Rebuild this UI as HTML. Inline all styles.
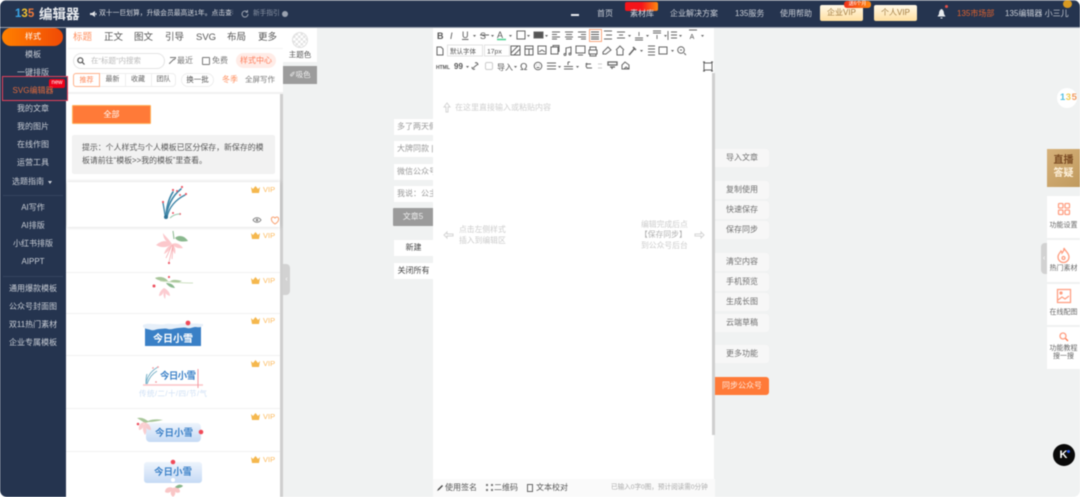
<!DOCTYPE html>
<html lang="zh"><head><meta charset="utf-8"><title>135编辑器</title>
<style>
*{box-sizing:border-box}
html,body{margin:0;padding:0;width:1080px;height:497px;overflow:hidden;background:#fff}
#r{position:relative;width:1080px;height:497px;overflow:hidden;background:#f0f2f2;border-radius:7px;font-family:"Liberation Sans","Noto Sans CJK SC",sans-serif;filter:blur(.5px)}
.a,.t,.c{position:absolute}
.t,.c{white-space:nowrap;line-height:12px;height:12px;font-size:8px}
.c{text-align:center}
.s{color:#c9ced6;left:0;width:66px}
.n{color:#c9ced6;top:8px}
.b{position:absolute;left:394px;width:39px;height:16px;background:#fff;overflow:hidden;font-size:8px;line-height:16px;color:#999;padding-left:3px;white-space:nowrap}
.r{position:absolute;left:715px;width:54px;height:18px;background:#f7f7f7;border-radius:0 3px 3px 0;font-size:8px;line-height:18px;text-align:center;color:#707070}
.v{position:absolute;left:251px;font-size:7.5px;line-height:10px;color:#fdbb5e;white-space:nowrap}
.v svg{vertical-align:-1px;margin-right:3px}
.l{position:absolute;left:66px;width:214px;height:1px;background:#f2f2f2}
.p{position:absolute;left:1047px;width:33px;background:#fff}
</style></head><body><div id="r">

<!-- header -->
<div class="a" style="left:0;top:0;width:1080px;height:28px;background:#25344f;border-top:1px solid #6f7889;border-bottom:1px solid #9aa2b0"></div>
<div class="t" style="left:15px;top:7px;font-size:11.500px;height:14px;line-height:14px;font-weight:bold"><span style="color:#3aa6e8">1</span><span style="color:#f2c230">3</span><span style="color:#ef7a3a">5</span></div>
<div class="t" style="left:39px;top:7px;font-size:13.500px;height:15px;line-height:15px;font-weight:bold;color:#e8ebef">编辑器</div>
<svg class="a" style="left:90px;top:10px" width="8" height="8" viewBox="0 0 8 8"><path d="M0 3h2l3-2v6L2 5H0z" fill="#dfe2e6"/><path d="M6 3v2" stroke="#dfe2e6"/></svg>
<div class="t" style="left:99px;top:8px;width:134px;overflow:hidden;color:#d8dbe0;font-size:6.800px">双十一巨划算，升级会员最高送1年。点击查看</div>
<svg class="a" style="left:241px;top:10px" width="8" height="8" viewBox="0 0 8 8"><path d="M7 4a3 3 0 1 1-1-2.200M6.500 0v2.200H4.500" fill="none" stroke="#9aa2b0"/></svg>
<div class="t n" style="left:253px;color:#8b95a6;font-size:6.700px">新手指引</div>
<div class="a" style="left:282px;top:11px;width:6px;height:6px;border-radius:50%;background:#9aa2b0"></div>
<div class="a" style="left:571px;top:14px;width:8px;height:2px;background:#e8ebef"></div>
<div class="t n" style="left:597px">首页</div>
<div class="a" style="left:625px;top:2px;width:33px;height:9px;background:linear-gradient(90deg,#f5141a,#f5141a 50%,#ff8a10);border-radius:2px"></div>
<div class="t n" style="left:630px;color:#d5d8de">素材库</div>
<div class="t n" style="left:670px">企业解决方案</div>
<div class="t n" style="left:735px">135服务</div>
<div class="t n" style="left:780px">使用帮助</div>
<div class="c" style="left:820px;top:5px;width:43px;height:16px;line-height:16px;border-radius:2px;background:linear-gradient(#fff8e8,#ffdf9f);color:#a27c42">企业VIP</div>
<div class="c" style="left:844px;top:1px;width:27px;height:7px;line-height:7px;font-size:5px;border-radius:3px;background:linear-gradient(90deg,#f0301a,#ff8a10);color:#fff">送6个月</div>
<div class="c" style="left:874px;top:5px;width:43px;height:16px;line-height:16px;border-radius:2px;background:linear-gradient(#fff8e8,#ffdf9f);color:#a27c42">个人VIP</div>
<svg class="a" style="left:937px;top:9px" width="9" height="10" viewBox="0 0 9 10"><path d="M4.500 0C2.500 1 2 3 2 5L.5 7.500h8L7 5c0-2-.5-4-2.500-5zM3.500 8.500h2v1h-2z" fill="#e8ebef"/></svg>
<div class="a" style="left:945px;top:5px;width:3px;height:3px;border-radius:50%;background:#e2504a"></div>
<div class="t n" style="left:957px;color:#e0622e">135市场部</div>
<div class="t n" style="left:1005px">135编辑器 小三儿</div>
<div class="a" style="left:1063px;top:0;width:9px;height:8px;border-radius:50%;background:#d89a22"></div>

<!-- sidebar -->
<div class="a" style="left:0;top:28px;width:66px;height:469px;background:#25344f"></div>
<div class="a" style="left:2px;top:28px;width:61px;height:18px;border-radius:9px;background:linear-gradient(90deg,#ff8000,#f04a06)"></div>
<div class="c s" style="top:31px;color:#fff">样式</div>
<div class="c s" style="top:49px">模板</div>
<div class="c s" style="top:67px">一键排版</div>
<div class="c s" style="top:103px">我的文章</div>
<div class="c s" style="top:121px">我的图片</div>
<div class="c s" style="top:139px">在线作图</div>
<div class="c s" style="top:157px">运营工具</div>
<div class="t" style="left:12px;top:176px;color:#c9ced6">选题指南</div>
<div class="a" style="left:48px;top:181px;border:2.500px solid transparent;border-top:3px solid #c9ced6"></div>
<div class="a" style="left:3px;top:195px;width:60px;height:1px;background:#35445f"></div>
<div class="c s" style="top:202px">AI写作</div>
<div class="c s" style="top:220px">AI排版</div>
<div class="c s" style="top:238px">小红书排版</div>
<div class="c s" style="top:256px">AIPPT</div>
<div class="a" style="left:3px;top:276px;width:60px;height:1px;background:#35445f"></div>
<div class="c s" style="top:283px">通用爆款模板</div>
<div class="c s" style="top:301px">公众号封面图</div>
<div class="c s" style="top:319px">双11热门素材</div>
<div class="c s" style="top:337px">企业专属模板</div>

<!-- panel -->
<div class="a" style="left:66px;top:28px;width:217px;height:469px;background:#fff"></div>

<!-- highlighted SVG menu item (sits over the panel edge) -->
<div class="a" style="left:2px;top:76px;width:66px;height:25px;background:#25344f;border:1.500px solid #e4405a"></div>
<div class="c" style="left:49px;top:79px;width:16px;height:9px;line-height:8px;font-size:6px;border-radius:2px;background:#f0021a;color:#fff">new</div>
<div class="c s" style="top:85px;color:#df6a3c">SVG编辑器</div>

<div class="t" style="left:73px;top:32px;font-size:9.500px;color:#ff9060">标题</div>
<div class="t" style="left:104px;top:32px;font-size:9.500px;color:#555">正文</div>
<div class="t" style="left:134px;top:32px;font-size:9.500px;color:#555">图文</div>
<div class="t" style="left:165px;top:32px;font-size:9.500px;color:#555">引导</div>
<div class="t" style="left:196px;top:32px;font-size:9.500px;color:#555">SVG</div>
<div class="t" style="left:227px;top:32px;font-size:9.500px;color:#555">布局</div>
<div class="t" style="left:258px;top:32px;font-size:9.500px;color:#555">更多</div>
<div class="a" style="left:68px;top:48px;width:215px;height:1px;background:#f3f3f3"></div>
<div class="a" style="left:73px;top:53px;width:92px;height:16px;border:1px solid #e4e4e4;border-radius:8px"></div>
<svg class="a" style="left:77px;top:57px" width="8" height="8" viewBox="0 0 8 8"><circle cx="3.300" cy="3.300" r="2.500" fill="none" stroke="#555" stroke-width="1.200"/><path d="M5 5l2.500 2.500" stroke="#555" stroke-width="1.200"/></svg>
<div class="t" style="left:91px;top:55px;color:#bbb;font-size:7.500px">在“标题”内搜索</div>
<svg class="a" style="left:169px;top:57px" width="7" height="7" viewBox="0 0 7 7"><path d="M0 7L5 2M1 .5h6L5 3" stroke="#777" fill="none"/></svg>
<div class="t" style="left:177px;top:55px;color:#777">最近</div>
<div class="a" style="left:202px;top:57px;width:8px;height:8px;border:1px solid #777;border-radius:1px"></div>
<div class="t" style="left:212px;top:55px;color:#777">免费</div>
<div class="c" style="left:236px;top:53px;width:40px;height:15px;line-height:15px;border-radius:8px;background:#ffece7;color:#ff7d5a">样式中心</div>
<div class="c" style="left:73px;top:73px;width:27px;height:14px;line-height:13px;font-size:7px;border:1px solid #ffb28c;border-radius:3px 0 0 3px;color:#ff8a5c">推荐</div>
<div class="c" style="left:100px;top:73px;width:76px;height:14px;border:1px solid #eee;border-left:0;border-radius:0 4px 4px 0"></div>
<div class="c" style="left:100px;top:74px;width:25px;font-size:7px;color:#666">最新</div>
<div class="a" style="left:125px;top:73px;width:1px;height:14px;background:#eee"></div>
<div class="c" style="left:125px;top:74px;width:26px;font-size:7px;color:#666">收藏</div>
<div class="a" style="left:151px;top:73px;width:1px;height:14px;background:#eee"></div>
<div class="c" style="left:151px;top:74px;width:25px;font-size:7px;color:#666">团队</div>
<div class="c" style="left:181px;top:73px;width:33px;height:14px;line-height:12px;font-size:7.500px;border:1px solid #eee;border-radius:7px;color:#555">换一批</div>
<div class="t" style="left:222px;top:74px;color:#ff9060">冬季</div>
<div class="t" style="left:245px;top:74px;color:#777;font-size:7.500px">全屏写作</div>
<div class="a" style="left:68px;top:92px;width:215px;height:2px;background:#f1f1f1"></div>
<div class="a" style="left:280px;top:94px;width:3px;height:403px;background:#cfcfcf"></div>
<div class="c" style="left:72px;top:105px;width:79px;height:19px;line-height:18px;background:#ff7a38;border:1px solid #ffb05a;border-radius:1px;color:#fff">全部</div>
<div class="a" style="left:72px;top:135px;width:203px;height:39px;background:#f2f2f2;border-radius:2px"></div>
<div class="t" style="left:82px;top:142px;color:#555;font-size:7.900px">提示：个人样式与个人模板已区分保存，新保存的模</div>
<div class="t" style="left:82px;top:155px;color:#555;font-size:7.900px">板请前往“模板&gt;&gt;我的模板”里查看。</div>

<div class="a" style="left:67px;top:182px;width:213px;height:45px;background:#fff;box-shadow:0 0 4px rgba(0,0,0,.18)"></div>
<div class="l" style="top:272px"></div><div class="l" style="top:313px"></div><div class="l" style="top:355px"></div><div class="l" style="top:408px"></div><div class="l" style="top:451px"></div>

<!-- VIP marks -->
<div class="v" style="top:185px"><svg width="9" height="7" viewBox="0 0 9 7"><path d="M0 1l2 2 2.500-3L7 3l2-2-1 6H1z" fill="#f5b84e"/></svg>VIP</div>
<div class="v" style="top:231px"><svg width="9" height="7" viewBox="0 0 9 7"><path d="M0 1l2 2 2.500-3L7 3l2-2-1 6H1z" fill="#f5b84e"/></svg>VIP</div>
<div class="v" style="top:276px"><svg width="9" height="7" viewBox="0 0 9 7"><path d="M0 1l2 2 2.500-3L7 3l2-2-1 6H1z" fill="#f5b84e"/></svg>VIP</div>
<div class="v" style="top:316px"><svg width="9" height="7" viewBox="0 0 9 7"><path d="M0 1l2 2 2.500-3L7 3l2-2-1 6H1z" fill="#f5b84e"/></svg>VIP</div>
<div class="v" style="top:359px"><svg width="9" height="7" viewBox="0 0 9 7"><path d="M0 1l2 2 2.500-3L7 3l2-2-1 6H1z" fill="#f5b84e"/></svg>VIP</div>
<div class="v" style="top:412px"><svg width="9" height="7" viewBox="0 0 9 7"><path d="M0 1l2 2 2.500-3L7 3l2-2-1 6H1z" fill="#f5b84e"/></svg>VIP</div>
<div class="v" style="top:455px"><svg width="9" height="7" viewBox="0 0 9 7"><path d="M0 1l2 2 2.500-3L7 3l2-2-1 6H1z" fill="#f5b84e"/></svg>VIP</div>

<!-- illustrations -->
<svg class="a" style="left:66px;top:180px" width="214" height="317" viewBox="66 180 214 317">
 <defs><linearGradient id="g" x1="0" y1="0" x2="0" y2="1"><stop offset="0" stop-color="#eef4fc"/><stop offset="1" stop-color="#c5daf5"/></linearGradient></defs>
 <!-- branch -->
 <g fill="none" stroke="#3f86a8" stroke-linecap="round">
  <path d="M166 218c0-10 3-20 7-26" stroke-width="1.600"/><path d="M166 218c1-11 6-22 15-29" stroke-width="1.600"/><path d="M167 217c2-9 8-17 18-22" stroke-width="1.300"/><path d="M165.500 218c-1-6-1.500-10-2.500-15" stroke-width="1.300"/>
 </g>
 <circle cx="166" cy="217" r="2" fill="#2f7295"/>
 <g fill="#ee5a68"><circle cx="173" cy="190" r="1.100"/><circle cx="177" cy="191" r="1"/><circle cx="182" cy="187" r="1.100"/><circle cx="186" cy="194" r="1.100"/><circle cx="180" cy="195" r="1"/><circle cx="163" cy="202" r="1.100"/><circle cx="173" cy="213" r="1"/><circle cx="180" cy="214" r="1"/></g>
 <path d="M170 218c3-3 6-4 10-4" stroke="#9ccab0" fill="none"/>
 <!-- flower 1 -->
 <g fill="#fbb6bc" opacity=".75"><path d="M172 244c-5-4-10-4-16 1 5 3 11 3 16-1z"/><path d="M172 244c-4-6-8-9-9-11 0 5 3 10 9 11z"/><path d="M172 244c4-2 8 0 11 4-5 1-9-1-11-4z"/><path d="M172 244c-4 2-7 6-8 10 4-2 7-5 8-10z"/><path d="M172 244c0 4 1 8 3 10 1-4 0-8-3-10z"/></g>
 <path d="M173 245l-4 17M173 245l-1 14M172 245l-6 13" stroke="#f6a5aa" stroke-width=".7" fill="none"/>
 <path d="M175 238c3-3 9-3 13 3-5 1-10 1-13-3z" fill="#8ab88e"/><path d="M173 231l1 8" stroke="#8ab88e"/>
 <circle cx="169" cy="263" r="1.100" fill="#ee5a68"/>
 <!-- flower 2 -->
 <path d="M155 278c5-2 10-1 13 3-5 0-10 0-13-3z" fill="#a8c69a"/><path d="M166 283c4 0 7 1 9 5-4 0-7-2-9-5z" fill="#8ab88e"/><path d="M170 281c4-2 8-1 12 0-4 2-8 2-12 0z" fill="#a8c69a"/><path d="M160 281c10 1 22 2 33 2" stroke="#c0d8b0" fill="none" stroke-width=".8"/>
 <g fill="#fbbcc2" opacity=".75"><path d="M164 288c-3 2-5 5-5 8 3 0 5-3 5-8z"/><path d="M164 288c4 2 6 5 6 8-4-1-6-4-6-8z"/><path d="M164 288c-1 4-1 8 1 11 1-4 1-8-1-11z"/></g>
 <circle cx="154" cy="286" r="1.500" fill="#ee5060"/><circle cx="169" cy="277" r="1.100" fill="#ee5a68"/>
 <!-- snow 1 -->
 <rect x="145" y="327" width="56" height="19" fill="#3a80c6"/>
 <path d="M143 325c4-2 8-1 11-1s8 1 12 0 9 1 13 0 9-1 24 0v2c-3 2-6 1-8 1s-5 2-8 1-6 0-9 0-7 2-10 1-6 0-9 0-5 2-8 1-6-1-8-3z" fill="#e6eff9"/>
 <circle cx="188" cy="323" r="2.400" fill="#f04a58"/>
 <text x="173" y="342" text-anchor="middle" font-size="10" font-weight="bold" fill="#fff" font-family="Liberation Sans,Noto Sans CJK SC,sans-serif">今日小雪</text>
 <!-- snow 2 -->
 <g fill="none" stroke="#76b0c8"><path d="M146 384c1-7 5-13 12-17M147 384c2-6 5-10 10-13M146 384c0-4 0-7 1-10"/></g>
 <g fill="#f39aa0"><circle cx="158" cy="367" r=".9"/><circle cx="153" cy="368" r=".9"/><circle cx="156" cy="382" r=".9"/></g>
 <path d="M143 385h60" stroke="#fcc5c8" stroke-width="1.500"/><path d="M198 369v19" stroke="#f49aa0"/>
 <text x="160" y="379" font-size="9.500" font-weight="bold" fill="#3d82c8" font-family="Liberation Sans,Noto Sans CJK SC,sans-serif" textLength="36">今日小雪</text>
 <text x="139" y="396" font-size="7.500" fill="#cfe0f5" font-family="Liberation Sans,Noto Sans CJK SC,sans-serif" textLength="68">传统/二/十/四/节/气</text>
 <!-- snow 3 -->
 <rect x="146" y="423" width="55" height="19" rx="4" fill="url(#g)"/>
 <path d="M137 418c5-1 8 1 11 3 4-2 9-2 15-1-5 1-10 2-14 2l-4 1z" fill="#a8c69a"/>
 <g fill="#fac6c8" opacity=".85"><path d="M144 422c-4 1-6 4-5 8 3 0 5-3 5-8z"/><path d="M144 422c4 1 7 4 7 8-4 0-7-3-7-8z"/><path d="M144 424c-2 4-1 8 1 11 2-3 2-8-1-11z"/></g>
 <circle cx="138" cy="424" r="1.300" fill="#ee5060"/><circle cx="201" cy="432" r="2.300" fill="#f04a58"/>
 <text x="174" y="436" text-anchor="middle" font-size="9.500" font-weight="bold" fill="#3d82c8" font-family="Liberation Sans,Noto Sans CJK SC,sans-serif">今日小雪</text>
 <!-- snow 4 -->
 <rect x="144" y="462" width="58" height="21" rx="3" fill="url(#g)"/>
 <circle cx="173" cy="462" r="2.300" fill="#f04a58"/><circle cx="173" cy="480" r="2" fill="#fff"/>
 <text x="173" y="475" text-anchor="middle" font-size="9.500" font-weight="bold" fill="#3d82c8" font-family="Liberation Sans,Noto Sans CJK SC,sans-serif">今日小雪</text>
 <g fill="#f9c0c0" opacity=".9"><path d="M173 488c-4-2-8 0-8 4 3 2 7 0 8-4z"/><path d="M173 488c4-2 7 0 7 4-3 2-6 0-7-4z"/><path d="M173 488c-3 3-3 7 0 9 3-2 3-6 0-9z"/></g>
 <path d="M175 487c3-3 6-3 8-1-2 2-5 3-8 1z" fill="#86b48a"/>
 <!-- eye & heart -->
 <path d="M253 220c2-3 6-3 8 0-2 3-6 3-8 0z" fill="none" stroke="#888"/><circle cx="257" cy="220" r="1.300" fill="#888"/>
 <path d="M275 224c-5-3-4-7-2-7 1 0 2 1 2 1s1-1 2-1c2 0 3 4-2 7z" fill="none" stroke="#f8a070"/>
</svg>
<div class="a" style="left:283px;top:264px;width:7px;height:31px;background:#d2d2d2;border-radius:0 4px 4px 0;color:#fff;font-size:7px;line-height:31px;text-align:center">‹</div>

<!-- theme column -->
<div class="a" style="left:283px;top:28px;width:34px;height:34px;background:#fff"></div>
<div class="a" style="left:292px;top:32px;width:16px;height:16px;border-radius:50%;border:1px solid #e0e0e0;background:repeating-conic-gradient(#e4e4e4 0 25%,#fff 0 50%) 0 0/5px 5px"></div>
<div class="c" style="left:283px;top:49px;width:34px;color:#555;font-size:7.500px">主题色</div>
<div class="c" style="left:283px;top:66px;width:34px;height:18px;line-height:18px;background:#9c9c9c;color:#eee;font-size:7.500px">✐吸色</div>

<!-- left article tabs -->
<div class="b" style="top:119px">多了两天假期</div>
<div class="b" style="top:141px">大牌同款 | 好</div>
<div class="b" style="top:164px">微信公众号平台</div>
<div class="b" style="top:186px">我说：公主请</div>
<div class="c" style="left:393px;top:208px;width:40px;height:18px;line-height:18px;background:#9b9b9b;color:#eee;border-radius:1px 0 0 1px">文章5</div>
<div class="c" style="left:394px;top:240px;width:39px;height:16px;line-height:16px;background:#fff;color:#444">新建</div>
<div class="c" style="left:394px;top:263px;width:39px;height:16px;line-height:16px;background:#fff;color:#444">关闭所有</div>

<!-- editor -->
<div class="a" style="left:433px;top:28px;width:281px;height:451px;background:#fff"></div>
<div class="a" style="left:433px;top:479px;width:282px;height:18px;background:#fafafa"></div>
<div class="a" style="left:712px;top:73px;width:3px;height:362px;background:#cfcfcf"></div>

<svg class="a" style="left:433px;top:28px" width="282" height="50" viewBox="433 28 282 50" fill="none" stroke="#666" stroke-width="1">
 <g font-family="Liberation Sans,Noto Sans CJK SC,sans-serif" fill="#555" stroke="none">
  <text x="437" y="39" font-size="9" font-weight="bold">B</text>
  <text x="450" y="39" font-size="9" font-style="italic">I</text>
  <text x="462" y="38" font-size="9" text-decoration="underline">U</text>
  <text x="480" y="39" font-size="9">S</text>
  <text x="497" y="38" font-size="9">A</text>
  <text x="692" y="39" font-size="7" text-anchor="middle">A</text>
  <text x="436" y="69" font-size="5" font-weight="bold">HTML</text>
  <text x="454" y="69" font-size="8" font-weight="bold">99</text>
  <text x="497" y="70" font-size="8">导入</text>
  <text x="520" y="70" font-size="10">Ω</text>
 </g>
 <path d="M480 35h9" stroke="#666"/>
 <path d="M497 39.500h9" stroke="#4dd090" stroke-width="1.500"/>
 <rect x="517" y="31" width="8" height="8"/><rect x="534" y="32" width="9" height="6" fill="#555"/>
 <g stroke-width=".9">
 <path d="M552 32h8M552 34.500h5M552 37h8M552 39h5M565 32h8M566 34.500h6M565 37h8M566 39h6M578 32h8M581 34.500h5M578 37h8M581 39h5"/>
 <path d="M591 32h8M591 34.500h8M591 37h8M591 39h8" stroke="#555"/>
 <path d="M604 31h8M604 39h8M606 35h6M617 32h8M619 35h4M617 38h8M635 38h8M639 32v4M635 40h8M653 31h8M653 33h8M657 35v4M668 31v9M671 32h6M671 35h6M671 38h6M689 30h8"/>
 </g>
 <rect x="589.500" y="29.500" width="12" height="12" stroke="#f8a880"/>
 <g fill="#666" stroke="none"><path d="M473 35h3l-1.500 2zM491 35h3l-1.500 2zM509 35h3l-1.500 2zM527 35h3l-1.500 2zM545 35h3l-1.500 2zM628 35h3l-1.500 2zM646 35h3l-1.500 2zM664 35h3l-1.500 2zM679 35h3l-1.500 2zM701 35h3l-1.500 2zM640 50h3l-1.500 2zM671 50h3l-1.500 2zM466 66h3l-1.500 2zM514 66h3l-1.500 2zM558 66h3l-1.500 2zM576 66h3l-1.500 2z"/></g>
 <!-- row 2 -->
 <path d="M437 47h4l2 2v6h-6z"/>
 <rect x="447.500" y="45" width="35" height="11" stroke="#e2e2e2"/><rect x="484.500" y="45" width="25" height="11" stroke="#e2e2e2"/>
 <g font-family="Liberation Sans,Noto Sans CJK SC,sans-serif" fill="#555" stroke="none"><text x="450" y="53.500" font-size="6.500">默认字体</text><text x="487" y="53.500" font-size="6.800">17px</text></g>
 <path d="M511 46h9v9h-9zM511 53l7-7M514 55l6-6"/><path d="M525 46h8v9h-8zM525 49h8M529 49v6"/><rect x="538" y="46" width="8" height="8"/><path d="M539 52l3-2 3 2"/><rect x="551" y="47" width="7" height="7"/><path d="M553 47v-1.500h6v6h-1"/>
 <path d="M566 55v-7l5-1v7"/><circle cx="565" cy="54.500" r="1"/><circle cx="570" cy="54" r="1"/>
 <rect x="576" y="46" width="9" height="7"/><path d="M578 55h5"/><path d="M589 50h8v4h-8zM590 50v-3h6v3M590 54v2h6v-2"/>
 <path d="M603 52l5-5 3 3-5 4h-3z"/><path d="M616 50l4-4 4 4M617 50v5h6v-5"/><path d="M629 55l6-7M633 47l3 3" stroke-width="1.500"/>
 <path d="M648 46h7M648 49h7M648 52h7M648 55h7"/><rect x="659" y="47" width="8" height="7"/><circle cx="681" cy="50" r="3.300"/><path d="M684 53l2 2M680 50h2"/>
 <!-- row 3 -->
 <path d="M473 68l5-4M472 67a2 2 0 0 0 3 2M478 65a2 2 0 0 0-3-2"/><rect x="485.500" y="62.500" width="7" height="7" rx="1.500" stroke="#ccc"/>
 <circle cx="538" cy="66" r="3.800"/><path d="M536.500 65h.5M539 65h.5M536.500 67.500h3"/>
 <path d="M547 63h9M547 66h9M547 69h9M564 69h9M564 66.500h9M568 62v3M568 62h2"/>
 <path d="M591 64h-4l-1 2 1 2h5M587 63l-1 1 1 1"/><path d="M598 64h4M598 68h4" stroke="#ccc"/>
 <path d="M608 62h9v3h-9zM610 67h5M612 67v2" stroke-width="1.300"/><path d="M622 69v-4l3-3 4 3v4zM624 69l2-2 3 2"/>
 <rect x="704" y="63" width="8" height="7"/><path d="M703 62h2M711 62h2M703 71h2M711 71h2" stroke-width="1.300"/>
</svg>

<svg class="a" style="left:443px;top:102px" width="8" height="11" viewBox="0 0 8 11"><path d="M4 1L1 5h2v5h2V5h2z" fill="none" stroke="#d4d4d4"/></svg>
<div class="t" style="left:455px;top:102px;color:#cfcfcf;font-size:8px">在这里直接输入或粘贴内容</div>
<svg class="a" style="left:443px;top:231px" width="11" height="8" viewBox="0 0 11 8"><path d="M1 4l3-3v2h6v2H4v2z" fill="none" stroke="#d4d4d4"/></svg>
<div class="t" style="left:459px;top:224px;color:#cccccc;font-size:7.800px">点击左侧样式</div>
<div class="t" style="left:459px;top:235px;color:#cccccc;font-size:7.800px">插入到编辑区</div>
<div class="t" style="left:641px;top:219px;color:#cccccc;font-size:7.800px">编辑完成后点</div>
<div class="t" style="left:640px;top:229px;color:#b0b0b0;font-size:7.800px">【保存同步】</div>
<div class="t" style="left:641px;top:240px;color:#cccccc;font-size:7.800px">到公众号后台</div>
<svg class="a" style="left:694px;top:231px" width="11" height="8" viewBox="0 0 11 8"><path d="M10 4L7 1v2H1v2h6v2z" fill="none" stroke="#d4d4d4"/></svg>

<!-- bottom bar -->
<svg class="a" style="left:437px;top:484px" width="7" height="7" viewBox="0 0 7 7"><path d="M0 7l1-2 4-4 1 1-4 4z" fill="#444"/></svg>
<div class="t" style="left:445px;top:482px;color:#555">使用签名</div>
<div class="a" style="left:486px;top:484px;width:7px;height:7px;border:2px dotted #777"></div>
<div class="t" style="left:494px;top:482px;color:#555">二维码</div>
<div class="a" style="left:527px;top:484px;width:6px;height:8px;border:1px solid #666"></div>
<div class="t" style="left:536px;top:482px;color:#555">文本校对</div>
<div class="t" style="left:611px;top:482px;color:#aaa;font-size:6.600px">已输入0字0图，预计阅读需0分钟</div>

<!-- right buttons -->
<div class="r" style="top:149px">导入文章</div>
<div class="r" style="top:181px">复制使用</div>
<div class="r" style="top:201px">快速保存</div>
<div class="r" style="top:221px">保存同步</div>
<div class="r" style="top:253px">清空内容</div>
<div class="r" style="top:273px">手机预览</div>
<div class="r" style="top:293px">生成长图</div>
<div class="r" style="top:314px">云端草稿</div>
<div class="r" style="top:345px">更多功能</div>
<div class="r" style="top:377px;background:#ff7a38;color:#ffe8dc">同步公众号</div>

<!-- far right -->
<div class="a" style="left:1057px;top:88px;width:20px;height:20px;border-radius:50%;background:#fff"></div>
<div class="t" style="left:1060px;top:92px;font-size:9.500px;font-weight:bold;letter-spacing:.5px"><span style="color:#55c0e0">1</span><span style="color:#f0cc50">3</span><span style="color:#f09a60">5</span></div>
<div class="a" style="left:1047px;top:149px;width:33px;height:38px;background:linear-gradient(135deg,#d6b17a,#c09a5e)"></div>
<div class="c" style="left:1047px;top:155px;width:33px;font-size:10px;font-weight:bold;color:#7a4a22">直播</div>
<div class="c" style="left:1047px;top:168px;width:33px;font-size:10px;font-weight:bold;color:#fff2dc">答疑</div>
<div class="p" style="top:196px;height:42px"></div>
<div class="p" style="top:240px;height:42px"></div>
<div class="p" style="top:284px;height:41px"></div>
<div class="p" style="top:327px;height:42px"></div>
<div class="a" style="left:1041px;top:243px;width:6px;height:31px;background:#d2d2d2;border-radius:4px 0 0 4px;color:#fff;font-size:7px;line-height:31px;text-align:center">‹</div>
<svg class="a" style="left:1047px;top:196px" width="33" height="173" viewBox="1047 196 33 173" fill="none" stroke="#ff9f82" stroke-width="1.300">
 <rect x="1058.500" y="203.500" width="4.500" height="4.500" rx="1"/><rect x="1065" y="203.500" width="4.500" height="4.500" rx="1"/><rect x="1058.500" y="210" width="4.500" height="4.500" rx="1"/><rect x="1065" y="210" width="4.500" height="4.500" rx="1"/>
 <path d="M1064 248c1 3 5 5 5 9a5 5 0 0 1-11 0c0-3 2-4 3-6 1 1 1 2 1 2 1-1 2-3 2-5z"/><circle cx="1063.500" cy="258" r="1.500"/>
 <rect x="1057.500" y="289.500" width="13" height="13"/><circle cx="1061" cy="293" r="1" fill="#ff9f82"/><path d="M1058 300l4-3 3 2 4-3"/>
 <circle cx="1063" cy="336" r="3"/><path d="M1065.500 338.500l2.500 2.500" stroke="#ff7a50"/>
</svg>
<div class="c" style="left:1047px;top:220px;width:33px;color:#666;font-size:7px">功能设置</div>
<div class="c" style="left:1047px;top:263px;width:33px;color:#666;font-size:7px">热门素材</div>
<div class="c" style="left:1047px;top:307px;width:33px;color:#666;font-size:7px">在线配图</div>
<div class="c" style="left:1047px;top:343px;width:33px;color:#666;font-size:7px">功能教程</div>
<div class="c" style="left:1047px;top:351px;width:33px;color:#666;font-size:7px">搜一搜</div>
<div class="a" style="left:1053px;top:444px;width:22px;height:22px;border-radius:50%;background:#0a0a0a"></div>
<div class="c" style="left:1053px;top:449px;width:21px;font-size:11px;font-weight:bold;color:#fff">K</div>
<div class="a" style="left:1067px;top:450px;width:3px;height:3px;border-radius:50%;background:#2a5cf0"></div>
</div></body></html>
